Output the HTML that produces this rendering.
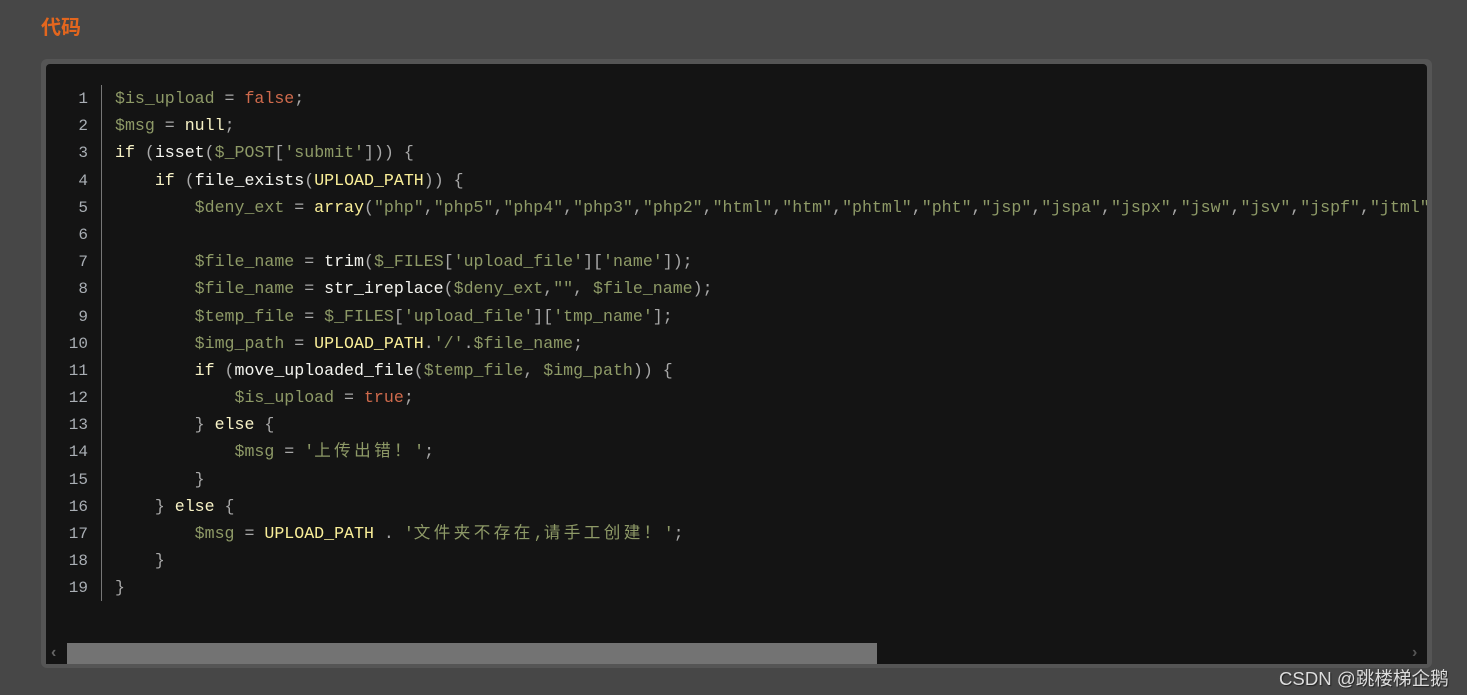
<!DOCTYPE html>
<html><head><meta charset="utf-8"><style>
body{margin:0;width:1467px;height:695px;background:#474747;overflow:hidden;position:relative;font-family:"Liberation Sans","Noto Sans CJK SC",sans-serif}
.title{position:absolute;left:41px;top:12px;color:#e3661e;font-weight:bold;font-size:20px;font-family:"Noto Sans CJK SC",sans-serif;line-height:28px}
.box{position:absolute;left:41px;top:59px;width:1391px;height:609px;background:#555;border-radius:6px}
.inner{position:absolute;left:5px;top:5px;width:1381px;height:600px;background:#141414;overflow:hidden;border-radius:4px 4px 0 0}
.code{position:absolute;left:115px;top:85px;width:1312px;height:558px;overflow:hidden;font-family:"Liberation Mono",monospace;font-size:16.6px;color:#a8a8a8}
.ln{position:absolute;left:46px;top:86px;width:42px;text-align:right;font-family:"Liberation Mono",monospace;font-size:16px;color:#a9aeb4}
.l{height:27.2px;line-height:27.2px;white-space:pre;overflow:hidden}
.gut{position:absolute;left:101px;top:85px;width:1px;height:516px;background:#777}
.v{color:#8e9a67}.s{color:#8e9a67}.k{color:#f7f2c6}.f{color:#f5f5f0}.r{color:#cf6a4c}.c{color:#f9ee98}
.cj{letter-spacing:3.4px;font-family:"Noto Sans CJK SC",sans-serif;font-size:16.6px;line-height:1}
.sb{position:absolute;left:46px;top:643px;width:1381px;height:21px;background:#141414}
.th{position:absolute;left:67px;top:643px;width:810px;height:21px;background:#737373}
.wm{position:absolute;left:1279px;top:664px;color:#ddd;font-size:18.6px;font-family:"Liberation Sans","Noto Sans CJK SC",sans-serif;text-shadow:1px 1px 1px #222}
</style></head><body>
<div class="title">代码</div>
<div class="box"><div class="inner"></div></div>
<div class="gut"></div>
<div class="ln"><div class="l">1</div><div class="l">2</div><div class="l">3</div><div class="l">4</div><div class="l">5</div><div class="l">6</div><div class="l">7</div><div class="l">8</div><div class="l">9</div><div class="l">10</div><div class="l">11</div><div class="l">12</div><div class="l">13</div><div class="l">14</div><div class="l">15</div><div class="l">16</div><div class="l">17</div><div class="l">18</div><div class="l">19</div></div>
<div class="code"><div class="l"><span class="v">$is_upload</span> = <span class="r">false</span>;</div><div class="l"><span class="v">$msg</span> = <span class="k">null</span>;</div><div class="l"><span class="k">if</span> (<span class="f">isset</span>(<span class="v">$_POST</span>[<span class="s">'submit'</span>])) {</div><div class="l">    <span class="k">if</span> (<span class="f">file_exists</span>(<span class="c">UPLOAD_PATH</span>)) {</div><div class="l">        <span class="v">$deny_ext</span> = <span class="c">array</span>(<span class="s">"php"</span>,<span class="s">"php5"</span>,<span class="s">"php4"</span>,<span class="s">"php3"</span>,<span class="s">"php2"</span>,<span class="s">"html"</span>,<span class="s">"htm"</span>,<span class="s">"phtml"</span>,<span class="s">"pht"</span>,<span class="s">"jsp"</span>,<span class="s">"jspa"</span>,<span class="s">"jspx"</span>,<span class="s">"jsw"</span>,<span class="s">"jsv"</span>,<span class="s">"jspf"</span>,<span class="s">"jtml"</span>,<span class="s">"asp"</span></div><div class="l"> </div><div class="l">        <span class="v">$file_name</span> = <span class="f">trim</span>(<span class="v">$_FILES</span>[<span class="s">'upload_file'</span>][<span class="s">'name'</span>]);</div><div class="l">        <span class="v">$file_name</span> = <span class="f">str_ireplace</span>(<span class="v">$deny_ext</span>,<span class="s">""</span>, <span class="v">$file_name</span>);</div><div class="l">        <span class="v">$temp_file</span> = <span class="v">$_FILES</span>[<span class="s">'upload_file'</span>][<span class="s">'tmp_name'</span>];</div><div class="l">        <span class="v">$img_path</span> = <span class="c">UPLOAD_PATH</span>.<span class="s">'/'</span>.<span class="v">$file_name</span>;</div><div class="l">        <span class="k">if</span> (<span class="f">move_uploaded_file</span>(<span class="v">$temp_file</span>, <span class="v">$img_path</span>)) {</div><div class="l">            <span class="v">$is_upload</span> = <span class="r">true</span>;</div><div class="l">        } <span class="k">else</span> {</div><div class="l">            <span class="v">$msg</span> = <span class="s">'<span class="cj">上传出错！</span>'</span>;</div><div class="l">        }</div><div class="l">    } <span class="k">else</span> {</div><div class="l">        <span class="v">$msg</span> = <span class="c">UPLOAD_PATH</span> . <span class="s">'<span class="cj">文件夹不存在</span>,<span class="cj">请手工创建！</span>'</span>;</div><div class="l">    }</div><div class="l">}</div></div>
<div class="sb"></div>
<div class="th"></div>
<div style="position:absolute;left:51px;top:644px;color:#666;font-size:16px;font-weight:bold">‹</div>
<div style="position:absolute;left:1412px;top:644px;color:#555;font-size:16px;font-weight:bold">›</div>
<div class="wm">CSDN @跳楼梯企鹅</div>
</body></html>
